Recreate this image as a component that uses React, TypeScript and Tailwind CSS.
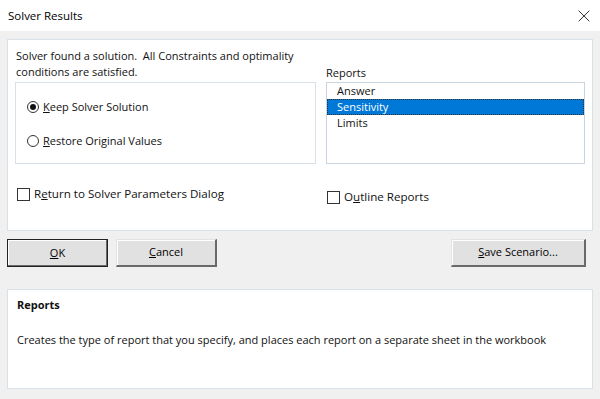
import { X } from 'lucide-react';

function Radio({ checked }: { checked?: boolean }) {
  return (
    <span className="w-[12px] h-[12px] rounded-full border border-[#333] bg-white flex items-center justify-center">
      {checked && <span className="w-[6px] h-[6px] rounded-full bg-[#111]" />}
    </span>
  );
}

function Check() {
  return <span className="w-[13px] h-[13px] border border-[#333] bg-white" />;
}

function Btn({ children, def, w }: { children: React.ReactNode; def?: boolean; w: string }) {
  return (
    <button
      className={
        def
          ? `${w} h-[28px] bg-[#e1e1e1] border border-[#222] shadow-[inset_-1px_-1px_0_#696969,inset_1px_1px_0_#fff] text-[11px] text-black`
          : `${w} h-[28px] bg-[#e1e1e1] border-t border-l border-[#e3e3e3] border-r-[2px] border-b-[2px] border-r-[#696969] border-b-[#696969] shadow-[inset_1px_1px_0_#fff] text-[11px] text-black`
      }
    >
      {children}
    </button>
  );
}

export default function App() {
  return (
    <div className="w-[600px] h-[399px] bg-[#f0f0f0] font-['Segoe_UI','Open_Sans',sans-serif] text-[11px] text-[#111] overflow-hidden">
      <div className="h-[31px] bg-white flex items-center justify-between pl-[8px] pr-[6px]">
        <span className="text-[11.5px] text-black">Solver Results</span>
        <X className="w-[20px] h-[20px] text-[#222]" strokeWidth={1.1} />
      </div>

      <div className="px-[7px] pt-[8px]">
        <div className="h-[192px] bg-white border border-[#d9e1e8] flex">
          <div className="w-[310px] flex flex-col">
            <p className="pl-[8px] pt-[8px] leading-[16px] whitespace-nowrap">
              Solver found a solution.&nbsp; All Constraints and optimality
              <br />
              conditions are satisfied.
            </p>
            <div className="ml-[7px] mt-[2px] w-[301px] h-[82px] border border-[#d9e1e8] flex flex-col pl-[11px] pt-[16px] gap-[18px]">
              <div className="flex items-center gap-[4px] h-[16px]">
                <Radio checked />
                <span><u>K</u>eep Solver Solution</span>
              </div>
              <div className="flex items-center gap-[4px] h-[16px]">
                <Radio />
                <span><u>R</u>estore Original Values</span>
              </div>
            </div>
            <div className="ml-[9px] mt-[22px] flex items-center gap-[4px] h-[16px] text-[11.6px]">
              <Check />
              <span>R<u>e</u>turn to Solver Parameters Dialog</span>
            </div>
          </div>

          <div className="ml-[8px] flex flex-col">
            <div className="pt-[25px] leading-[16px]">Reports</div>
            <div className="mt-[1px] w-[259px] h-[82px] border border-[#c8d4e0] flex flex-col">
              <div className="h-[16px] leading-[16px] pl-[10px]">Answer</div>
              <div className="h-[16px] leading-[14px] pl-[9px] bg-[#0078d7] text-white border border-dotted border-[#333]">Sensitivity</div>
              <div className="h-[16px] leading-[16px] pl-[10px]">Limits</div>
            </div>
            <div className="ml-[1px] mt-[25px] flex items-center gap-[4px] h-[16px] text-[11.6px]">
              <Check />
              <span>O<u>u</u>tline Reports</span>
            </div>
          </div>
        </div>

        <div className="mt-[8px] flex items-center">
          <Btn def w="w-[101px]"><u>O</u>K</Btn>
          <span className="w-[8px]" />
          <Btn w="w-[101px]"><u>C</u>ancel</Btn>
          <span className="flex-1" />
          <Btn w="w-[135px]"><u>S</u>ave Scenario...</Btn>
          <span className="w-[7px]" />
        </div>

        <div className="mt-[22px] h-[100px] bg-white border border-[#d9e1e8] pl-[9px] pt-[7px]">
          <div className="font-bold leading-[16px]">Reports</div>
          <div className="mt-[19px] leading-[16px] whitespace-nowrap">
            Creates the type of report that you specify, and places each report on a separate sheet in the workbook
          </div>
        </div>
      </div>
    </div>
  );
}
